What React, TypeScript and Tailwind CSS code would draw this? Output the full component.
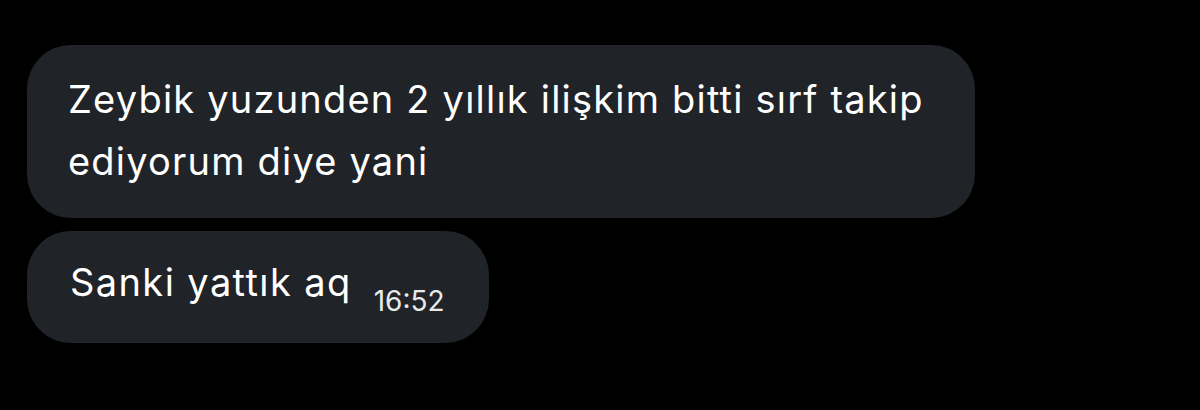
export default function App() {
  return (
    <div
      className="w-[1200px] h-[410px] bg-black flex flex-col items-start pt-[45px] pl-[27px] gap-[13px]"
      style={{ fontFamily: 'Inter, "Noto Sans", sans-serif' }}
    >
      <div className="w-[948px] h-[173px] bg-[#202327] rounded-[44px] pl-[41px] pt-[23px] text-white text-[38px] leading-[62px] tracking-[1.2px]">
        Zeybik yuzunden 2 yıllık ilişkim bitti sırf takip
        <br />
        ediyorum diye yani
      </div>
      <div className="h-[112px] bg-[#202327] rounded-[44px] pl-[43px] pr-[44px] pt-[20px]">
        <div className="flex items-end h-[62px]">
          <span className="text-white text-[38px] leading-[62px] tracking-[1.4px]">Sanki yattık aq</span>
          <span className="ml-[22px] text-[#e7e9ea] text-[28px] leading-[24px]">16:52</span>
        </div>
      </div>
    </div>
  );
}
